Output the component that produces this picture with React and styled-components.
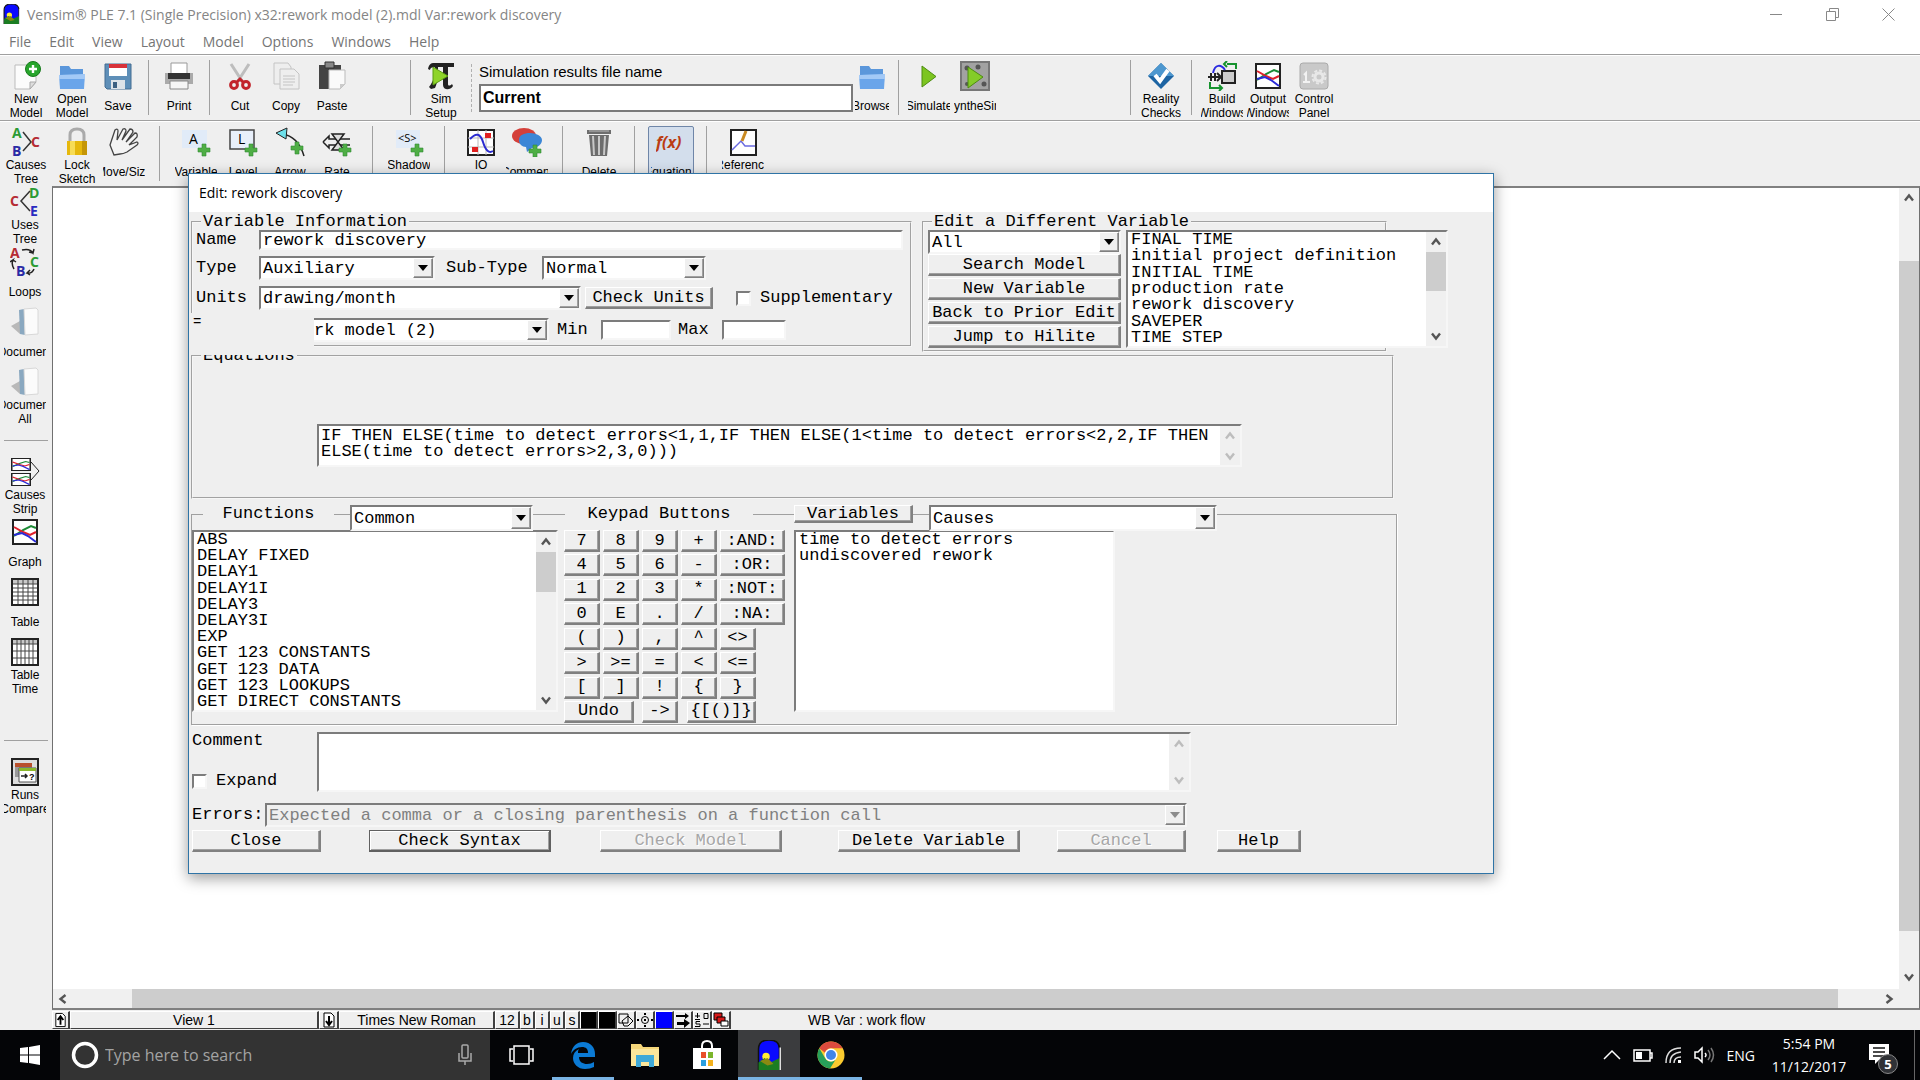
import React from 'react';
import styled, { createGlobalStyle, css } from 'styled-components';

const ui = `'Open Sans', 'Noto Sans', sans-serif`;
const sans = `'Liberation Sans', Arial, sans-serif`;
const mono = `'Liberation Mono', 'Courier New', monospace`;
const face = '#efefef';

const GlobalStyle = createGlobalStyle`
  * {
    box-sizing: border-box;
  }
  body {
    margin: 0;
    background: ${face};
    font-family: ${sans};
    overflow: hidden;
  }
  button, input, select, textarea {
    font: inherit;
    color: inherit;
    margin: 0;
    border-radius: 0;
    outline: none;
  }
`;

const raised = css`
  border: 1px solid;
  border-color: #fff #808080 #808080 #fff;
  box-shadow: inset -1px -1px 0 #a0a0a0;
`;

const sunken = css`
  border: 2px solid;
  border-color: #7c7c7c #f6f6f6 #f6f6f6 #7c7c7c;
`;

/* ---------- window frame ---------- */

const Window = styled.div`
  height: 100vh;
  display: flex;
  flex-direction: column;
  position: relative;
`;

const TitleBar = styled.header`
  height: 28px;
  flex: none;
  display: flex;
  align-items: center;
  padding: 0 4px 0 3px;
  background: #fff;
  color: #858585;
  font-family: ${ui};
  font-size: 14px;
`;

const TitleText = styled.span`
  flex: 1;
  padding-left: 7px;
`;

const CaptionButton = styled.button`
  width: 56px;
  height: 28px;
  padding: 0;
  border: 0;
  background: none;
  display: grid;
  place-items: center;
`;

const MenuBar = styled.nav`
  height: 26px;
  flex: none;
  display: flex;
  align-items: center;
  gap: 18px;
  padding-left: 9px;
  background: #fff;
  font-family: ${ui};
  font-size: 14px;
`;

const MenuLink = styled.a`
  color: #757575;
  text-decoration: none;
`;

/* ---------- toolbars ---------- */

const Toolbar = styled.div`
  height: 66px;
  flex: none;
  display: flex;
  padding: 5px 0 0 3px;
  border-top: 1px solid #a0a0a0;
  box-shadow: inset 0 1px 0 #fff;
`;

const ToolGroup = styled.div`
  display: flex;
  gap: ${p => p.$gap || 0}px;
  margin-right: ${p => p.$after || 0}px;
`;

const ToolButton = styled.button`
  width: ${p => p.$width || 46}px;
  height: 60px;
  padding: 0;
  border: ${p => (p.$active ? '1px solid #6f86a8' : '0')};
  background: ${p => (p.$active ? '#d3deec' : 'none')};
  border-radius: 2px;
  display: flex;
  flex-direction: column;
  align-items: center;
`;

const ToolIcon = styled.svg`
  width: 30px;
  height: 30px;
  margin: 1px 0;
  flex: none;
`;

const ToolLabel = styled.span`
  height: 28px;
  width: 42px;
  max-width: 90%;
  font-size: 12px;
  line-height: 14px;
  color: #000;
  display: flex;
  flex-direction: column;
  justify-content: center;
  align-items: center;
  white-space: nowrap;
  overflow: hidden;
`;

const Separator = styled.span`
  width: 1px;
  height: 55px;
  background: #a0a0a0;
  margin: ${p => (p.$wide ? '0 13px 0 12px' : '0 7px')};
`;

const DottedSeparator = styled.span`
  height: 48px;
  border-left: 1px dashed #b0b0b0;
  margin: 4px 7px 0;
`;

const ResultsField = styled.div`
  width: 374px;
  display: flex;
  flex-direction: column;
  gap: 2px;
  label {
    font-size: 15px;
    line-height: 21px;
    padding-top: 1px;
  }
  input {
    height: 28px;
    padding: 0 2px;
    border: 2px solid #7a7a7a;
    background: #fff;
    font-size: 16px;
    font-weight: bold;
  }
`;

/* ---------- workspace ---------- */

const Workspace = styled.div`
  flex: 1;
  min-height: 0;
  display: flex;
`;

const Sidebar = styled.aside`
  width: 52px;
  flex: none;
  padding-left: 2px;
  hr {
    width: 44px;
    margin: 14px 0 15px 2px;
    border: 0;
    border-top: 1px solid #a0a0a0;
  }
`;

const SideGap = styled.div`
  height: 30px;
`;

const Main = styled.div`
  flex: 1;
  min-width: 0;
  display: flex;
  flex-direction: column;
`;

const CanvasFrame = styled.main`
  flex: 1;
  display: flex;
  background: #fff;
  border: 1px solid #707070;
  border-top: 2px solid #808080;
  border-bottom: 2px solid #808080;
`;

const CanvasColumn = styled.div`
  flex: 1;
  display: flex;
  flex-direction: column;
`;

const Canvas = styled.div`
  flex: 1;
`;

const VTrack = styled.div`
  width: ${p => p.$width || 20}px;
  flex: none;
  display: flex;
  flex-direction: column;
  background: #f0f0f0;
`;

const HTrack = styled.div`
  height: 19px;
  display: flex;
  background: #f0f0f0;
`;

const ScrollButton = styled.button`
  width: 20px;
  height: 20px;
  flex: none;
  padding: 0;
  border: 0;
  background: none;
  display: grid;
  place-items: center;
  svg {
    width: 10px;
    height: 10px;
    fill: none;
    stroke: ${p => (p.disabled ? '#bdbdbd' : '#555')};
    stroke-width: 2.4;
  }
`;

const ScrollSpace = styled.span`
  flex: ${p => p.$grow || 0} 1 ${p => p.$size || 0}px;
`;

const Thumb = styled.span`
  flex: ${p => (p.$grow ? `${p.$grow} 1 0px` : `0 0 ${p.$size}px`)};
  background: #cdcdcd;
`;

const StatusBar = styled.footer`
  height: 20px;
  flex: none;
  display: flex;
  align-items: center;
  font-size: 14px;
`;

const StatusCell = styled.button`
  width: ${p => p.$width}px;
  height: 18px;
  padding: 0;
  background: ${p => p.$fill || face};
  border: 1px solid;
  border-color: #fff #404040 #404040 #fff;
  border-right-width: 2px;
  display: flex;
  align-items: center;
  justify-content: center;
  line-height: 16px;
  svg {
    width: 16px;
    height: 16px;
  }
`;

const StatusText = styled.span`
  padding-left: 77px;
`;

/* ---------- dialog ---------- */

const Dialog = styled.section`
  position: absolute;
  left: 188px;
  top: 173px;
  width: 68vw;
  height: 701px;
  background: ${face};
  border: 1px solid #2f74a6;
  box-shadow: 0 4px 14px rgba(0, 0, 0, 0.4);
  font-family: ${mono};
  font-size: 17px;
  line-height: 16px;
`;

const DialogTitle = styled.h1`
  height: 38px;
  margin: 0;
  padding-left: 10px;
  background: #fff;
  font-family: ${ui};
  font-size: 14px;
  font-weight: normal;
  line-height: 38px;
`;

const DialogBody = styled.form`
  padding: 2px 0 0 2px;
`;

const TopRow = styled.div`
  display: flex;
  align-items: flex-start;
  gap: 10px;
`;

const Group = styled.fieldset`
  margin: ${p => (p.$raised ? '-4px' : '0')} 0 0;
  padding: 0;
  min-width: 0;
  width: ${p => p.$width}px;
  height: ${p => p.$height}px;
  border: 2px groove #f6f6f6;
  position: relative;
  legend {
    margin-left: 8px;
    padding: 0 2px;
    clip-path: ${p => (p.$raised ? 'inset(7px 0 0 0)' : 'none')};
  }
`;

const Rows = styled.div`
  display: flex;
  flex-direction: column;
  gap: 6px;
  padding: 0 7px 0 3px;
`;

const FieldRow = styled.div`
  height: ${p => p.$height || 24}px;
  display: flex;
  align-items: center;
`;

const Label = styled.label`
  width: ${p => (p.$width ? `${p.$width}px` : 'auto')};
  flex: none;
  margin-left: ${p => p.$gap || 0}px;
  white-space: nowrap;
`;

const TextInput = styled.input`
  ${sunken}
  width: ${p => (p.$width ? `${p.$width}px` : 'auto')};
  flex: ${p => (p.$width ? 'none' : 1)};
  height: 20px;
  padding: 0 2px;
  background: #fff;
`;

const ComboBox = styled.div`
  ${sunken}
  width: ${p => p.$width}px;
  flex: none;
  height: ${p => p.$height || 24}px;
  background: ${p => (p.$off ? face : '#fff')};
  color: ${p => (p.$off ? '#808080' : '#000')};
  position: relative;
  select {
    width: 100%;
    height: 100%;
    padding: 1px 20px 0 2px;
    border: 0;
    background: none;
    appearance: none;
    opacity: 1;
  }
`;

const ComboArrow = styled.span`
  ${raised}
  position: absolute;
  top: 0;
  right: 0;
  bottom: 0;
  width: 20px;
  background: ${face};
  display: grid;
  place-items: center;
  pointer-events: none;
`;

const PushButton = styled.button`
  ${raised}
  border-right-width: 2px;
  border-bottom-width: 2px;
  width: ${p => (p.$width ? `${p.$width}px` : '100%')};
  flex: none;
  height: ${p => p.$height || 22}px;
  margin-left: ${p => p.$gap || 0}px;
  padding: 0;
  background: ${face};
  line-height: 16px;
  white-space: nowrap;
  ${p =>
    p.$default &&
    css`
      border-color: #606060;
      box-shadow: inset 1px 1px 0 #fff, inset -1px -1px 0 #a0a0a0;
    `}
  &:disabled {
    color: #a6a6a6;
    text-shadow: 1px 1px 0 #fff;
  }
`;

const CheckBox = styled.input`
  ${sunken}
  appearance: none;
  width: 15px;
  height: 15px;
  flex: none;
  margin: 0 9px 0 ${p => p.$gap || 0}px;
  background: #fff;
`;

/* stale strip of background left over the default-value row */
const EqualsPatch = styled.div`
  position: absolute;
  left: -2px;
  bottom: -2px;
  width: 123px;
  height: 34px;
  padding: 1px 0 0 2px;
  background: ${face};
  font-size: 14px;
`;

const DefaultRow = styled(FieldRow)`
  margin-top: 2px;
  padding-left: 63px;
`;

const PickRow = styled.div`
  display: flex;
  gap: 5px;
  padding-left: 4px;
`;

const PickButtons = styled.div`
  width: 193px;
  flex: none;
  display: flex;
  flex-direction: column;
  gap: 2px;
  > div {
    margin-bottom: -2px;
  }
`;

const ListBox = styled.div`
  ${sunken}
  width: ${p => p.$width}px;
  height: ${p => p.$height}px;
  flex: none;
  display: flex;
  background: #fff;
  ul {
    flex: 1;
    margin: 0;
    padding: 0 0 0 3px;
    list-style: none;
    display: flex;
    flex-direction: column;
    justify-content: ${p => (p.$full ? 'space-between' : 'flex-start')};
    white-space: nowrap;
  }
`;

const EquationBox = styled.div`
  ${sunken}
  width: 925px;
  height: 43px;
  margin: 60px 0 0 124px;
  display: flex;
  background: #fff;
`;

const CommentBox = styled(EquationBox)`
  width: 874px;
  height: 60px;
  margin: 0;
`;

const TextArea = styled.textarea`
  flex: 1;
  padding: 2px 0 0 2px;
  border: 0;
  background: none;
  resize: none;
  overflow: hidden;
`;

const Builder = styled.div`
  width: 1206px;
  margin-top: 6px;
`;

const BuilderHead = styled.div`
  height: 25px;
  display: flex;
  align-items: flex-start;
`;

const Rule = styled.span`
  width: ${p => (p.$width ? `${p.$width}px` : 'auto')};
  flex: ${p => (p.$width ? 'none' : 1)};
  height: 17px;
  margin-top: 9px;
  border-top: 1px solid #a0a0a0;
  border-left: ${p => (p.$start ? '1px solid #a0a0a0' : 0)};
  border-right: ${p => (p.$width ? 0 : '1px solid #a0a0a0')};
  box-shadow: ${p => (p.$width ? 'none' : '1px 0 0 #fff')};
`;

const HeadText = styled.span`
  width: ${p => p.$width}px;
  text-align: center;
  padding-top: 1px;
  white-space: nowrap;
`;

const BuilderBody = styled.div`
  height: 195px;
  display: flex;
  align-items: flex-start;
  border: 1px solid #a0a0a0;
  border-top: 0;
  box-shadow: 1px 1px 0 #fff;
`;

const Keypad = styled.div`
  width: 222px;
  height: 193px;
  margin: 0 8px 0 6px;
  display: flex;
  flex-direction: column;
  justify-content: space-between;
`;

const KeyRow = styled.div`
  display: flex;
  gap: 3px;
`;

const CommentRow = styled.div`
  display: flex;
  padding: 7px 0 11px 1px;
`;

const CommentLabels = styled.div`
  width: 125px;
  display: flex;
  flex-direction: column;
  justify-content: space-between;
  padding: 1px 0 3px;
`;

const ErrorRow = styled(FieldRow)`
  padding-left: 1px;
`;

const ActionRow = styled.div`
  display: flex;
  padding: 3px 0 0 1px;
`;

/* ---------- taskbar ---------- */

const Taskbar = styled.div`
  height: 50px;
  flex: none;
  display: flex;
  background: #040507;
  color: #fff;
  font-family: ${ui};
  font-size: 14px;
`;

const TaskButton = styled.button`
  width: ${p => p.$width || 62}px;
  padding: 0;
  border: 0;
  background: ${p => (p.$active ? '#3b3c3e' : 'none')};
  border-bottom: 3px solid ${p => (p.$running ? '#7ab4e4' : 'transparent')};
  border-top: 3px solid transparent;
  background-clip: border-box;
  display: grid;
  place-items: center;
`;

const SearchBox = styled.div`
  width: 430px;
  display: flex;
  align-items: center;
  padding: 0 17px 0 11px;
  background: #333;
  input {
    flex: 1;
    min-width: 0;
    border: 0;
    padding: 0 6px;
    background: none;
    font-size: 16px;
  }
  input::placeholder {
    color: #a3a3a3;
  }
`;

const Tray = styled.div`
  margin-left: auto;
  display: flex;
  align-items: center;
  gap: 12px;
  padding-right: 5px;
`;

const Clock = styled.time`
  width: 84px;
  text-align: center;
  line-height: 23px;
`;

const Notices = styled.button`
  width: 52px;
  height: 50px;
  padding: 8px 12px 0 0;
  border: 0;
  border-right: 1px solid #666;
  background: none;
  color: #fff;
`;

/* ---------- drawings ---------- */

const Plus = ({ x = 17, y = 17 }) => (
  <path
    transform={`translate(${x} ${y})`}
    d="M4 0h4v4h4v4H8v4H4V8H0V4h4z"
    fill="#4fae45"
    stroke="#2f8a34"
    strokeWidth=".6"
  />
);

const Folder = () => (
  <g>
    <path d="M3 5h9l2 3h12v7H3z" fill="#5b97db" />
    <path d="M2 14l26-1-1 15H3z" fill="#6aa5ea" />
    <path d="M2 14l26-1v5H2z" fill="#a3c9f6" />
  </g>
);

const Lines = ({ x = 2, y = 2, w = 26, h = 26 }) => (
  <svg x={x} y={y} width={w} height={h} viewBox="0 0 26 26" preserveAspectRatio="none">
    <path d="M1 1h24v24H1z" fill="#fff" stroke="#222" strokeWidth="2" />
    <g fill="none" strokeWidth="2">
      <path d="M2 17l9-6 8-4 5 2" stroke="#1c8a35" />
      <path d="M2 8l9 5 7 3 6-3" stroke="#e0202c" />
      <path d="M2 16l8-2 6 3 8 6" stroke="#2a2ad8" />
    </g>
  </svg>
);

const Letter = ({ x, y, c, children }) => (
  <text x={x} y={y} fill={c} fontFamily="Open Sans" fontWeight="bold" fontSize="14">
    {children}
  </text>
);

const Notebook = () => (
  <g>
    <path d="M1 19l9-5v13z" fill="#b8b8b8" />
    <path d="M9 3l5-1 1 26-5-1z" fill="#8aa8c0" />
    <path d="M14 2l12-1 2 2v24l-13 1z" fill="#fbfbfb" stroke="#d8d8d8" />
  </g>
);

const Grid = ({ cols, rows }) => (
  <g>
    <path d="M2 2h26v26H2z" fill="#fff" stroke="#222" strokeWidth="2" />
    <path d="M3 3h24v4H3z" fill="#c9c9c9" />
    <path d={cols.map(c => `M${c} 3v24`).join('') + rows.map(r => `M3 ${r}h24`).join('')} stroke="#444" />
  </g>
);

const drawings = {
  newModel: (
    <g>
      <path d="M4 4h21v17l-6 7H4z" fill="#fcfcfc" stroke="#bbb" />
      <path d="M19 28v-7h6z" fill="#ddd" stroke="#aaa" />
      <circle cx="22" cy="8" r="7.5" fill="#27a52c" stroke="#177a1c" />
      <path d="M22 4v8M18 8h8" stroke="#fff" strokeWidth="2.4" />
    </g>
  ),
  folder: <Folder />,
  save: (
    <g>
      <path d="M2 3h26v25H4l-2-2z" fill="#5e8fb8" stroke="#426d92" />
      <path d="M6 3h18v12H6z" fill="#fff" />
      <path d="M6 3h18v4H6z" fill="#d8323a" />
      <path d="M8 19h14v9H8z" fill="#dde3e8" />
      <path d="M10 21h4v6h-4z" fill="#3b5f80" />
    </g>
  ),
  print: (
    <g>
      <path d="M7 2h16v11H7z" fill="#fff" stroke="#999" />
      <path d="M1 12h28v11H1z" fill="#aaa" />
      <path d="M4 12h22v6H4z" fill="#333" />
      <path d="M6 20h18v8H6z" fill="#f5f5f5" stroke="#888" />
    </g>
  ),
  cut: (
    <g>
      <path d="M6 3l11 17M24 3L13 20" stroke="#bdbdbd" strokeWidth="3" />
      <g fill="none" stroke="#c2242c" strokeWidth="3">
        <circle cx="9" cy="24" r="3.4" />
        <circle cx="21" cy="24" r="3.4" />
        <path d="M12 21l3-3 3 3" />
      </g>
    </g>
  ),
  copy: (
    <g fill="#eee" stroke="#c4c4c4">
      <path d="M3 2h14l3 4v17H3z" />
      <path d="M9 8h14l5 5v15H9z" />
      <path d="M12 15h12M12 18h12M12 21h12M12 24h10" />
    </g>
  ),
  paste: (
    <g>
      <path d="M2 4h22v24H2z" fill="#444" />
      <path d="M8 1h9v6H8z" fill="#888" stroke="#333" />
      <path d="M12 9h16v14l-5 5H12z" fill="#fafafa" stroke="#bbb" />
      <path d="M23 28v-5h5z" fill="#ccc" />
    </g>
  ),
  simSetup: (
    <g>
      <path d="M2 8c1-5 3-6 6-6h20v4h-6v17c0 2 2 2 4 0l1 2c-3 5-10 4-10-1V6h-5c0 8 0 15-3 21l-4 1-2-2C8 20 9 13 9 6 6 6 4 7 4 9z" fill="#222" />
      <path d="M7 6l15 9-15 9z" fill="#8fd42a" stroke="#5a9c12" />
    </g>
  ),
  play: <path d="M8 5l14 10.500L8 26z" fill="#7cc51f" stroke="#4d8c11" />,
  synth: (
    <g>
      <path d="M1 1h28v28H1z" fill="#a2a2a2" stroke="#777" strokeWidth="2" />
      <g fill="#555">
        <circle cx="7" cy="7" r="2.500" />
        <circle cx="18" cy="6" r="2.500" />
        <circle cx="24" cy="23" r="2.500" />
        <circle cx="7" cy="23" r="2" />
      </g>
      <path d="M8 6l15 10L8 27z" fill="#84cc28" stroke="#4d8c11" />
    </g>
  ),
  reality: (
    <g>
      <path d="M15 2l13 13-13 13L2 15z" fill="#1d64a3" />
      <path d="M15 2l13 13H2z" fill="#4d97cf" />
      <path d="M9 14l5 6 8-11" fill="none" stroke="#fff" strokeWidth="4" />
    </g>
  ),
  build: (
    <g fill="none" strokeWidth="2">
      <path d="M15 10h13v12H15z" fill="#ccc" stroke="#222" />
      <path d="M1 16h14M4 12v8M8 12v8M10 12l4 4-4 4" stroke="#222" />
      <path d="M6 12C8 3 14 3 18 9" stroke="#2b2be0" />
      <path d="M29 8V3h-9M20 0l-3 3 3 3" stroke="#16932e" />
      <path d="M3 21v6h12M12 24l3 3-3 3" stroke="#16932e" />
    </g>
  ),
  lines: <Lines />,
  control: (
    <g>
      <rect x="1" y="2" width="28" height="26" rx="3" fill="#c9c9c9" stroke="#aaa" />
      <circle cx="20" cy="16" r="4" fill="none" stroke="#e8e8e8" strokeWidth="3" />
      <circle cx="20" cy="16" r="6.500" fill="none" stroke="#e8e8e8" strokeWidth="2" strokeDasharray="3 2" />
      <path d="M4 21h7M7 21v-9l-2 2" fill="none" stroke="#f2f2f2" strokeWidth="2" />
    </g>
  ),
  causes: (
    <g>
      <Letter x="1" y="11" c="#2c9b35">A</Letter>
      <Letter x="1" y="29" c="#2a2aa5">B</Letter>
      <Letter x="20" y="20" c="#b52c34">C</Letter>
      <path d="M12 5l8 10-8 9" fill="none" stroke="#333" strokeWidth="1.500" />
    </g>
  ),
  uses: (
    <g>
      <Letter x="0" y="19" c="#b52c34">C</Letter>
      <Letter x="19" y="11" c="#2c9b35">D</Letter>
      <Letter x="20" y="29" c="#2a2ac0">E</Letter>
      <path d="M20 4l-9 10 9 10" fill="none" stroke="#333" strokeWidth="1.500" />
    </g>
  ),
  loops: (
    <g>
      <Letter x="0" y="11" c="#b52c34">A</Letter>
      <Letter x="20" y="20" c="#2c9b35">C</Letter>
      <Letter x="6" y="29" c="#2a2aa5">B</Letter>
      <path d="M12 3q8-2 11 3l1-4m-1 4l-4-1M4 22q-3-5-1-9l-3 2m3-2l3 2M24 22q-2 5-7 4l3-3m-3 3l3 2" fill="none" stroke="#222" strokeWidth="1.500" />
    </g>
  ),
  lock: (
    <g>
      <path d="M8 15V8q0-6 7-6t7 6v7" fill="none" stroke="#aaa" strokeWidth="3" />
      <path d="M5 14h20v14H5z" fill="#e6b80c" />
      <path d="M8 14h5v14H8z" fill="#f7dc55" />
      <path d="M20 14h5v14h-5z" fill="#c59606" />
    </g>
  ),
  hand: (
    <path d="M5 28L1 18 6 3q3-2 3 1L8 13 14 2q3-1 3 2l-4 9 8-11q3 0 3 3l-7 10 9-9q3 0 2 4l-8 8 8-3q2 1 0 3l-10 7q-4 2-7 2z" fill="#f4f4f4" stroke="#444" strokeWidth="1.300" />
  ),
  variable: (
    <g>
      <path d="M1 3h25v18H1z" fill="#e1ebf8" />
      <text x="8" y="17" fontFamily="Open Sans" fontSize="14">A</text>
      <Plus />
    </g>
  ),
  level: (
    <g>
      <path d="M2 3h24v19H2z" fill="#e8effa" stroke="#444" strokeWidth="1.500" />
      <text x="10" y="17" fontFamily="Open Sans" fontSize="14">L</text>
      <Plus />
    </g>
  ),
  arrow: (
    <g>
      <path d="M7 7q16 2 22 22" fill="none" stroke="#222" strokeWidth="1.500" />
      <path d="M1 6l11-5-1 11z" fill="#6ee0ea" stroke="#222" />
      <Plus x={16} y={15} />
    </g>
  ),
  rate: (
    <g>
      <path d="M1 15l6-6v3h21M1 15l6 6v-3h21" fill="none" stroke="#222" strokeWidth="1.500" />
      <path d="M10 7h12L10 23h12z" fill="#ddd" stroke="#222" strokeWidth="1.500" />
      <Plus />
    </g>
  ),
  shadow: (
    <g>
      <path d="M2 3h24v18H2z" fill="#e1ebf8" />
      <text x="4" y="15" fontFamily="Open Sans" fontSize="11">&lt;S&gt;</text>
      <Plus />
    </g>
  ),
  io: (
    <g>
      <path d="M2 3h26v25H2z" fill="#fff" stroke="#222" strokeWidth="2" />
      <path d="M12 3v25M20 3v25M2 11h26M2 20h26" stroke="#bbb" />
      <path d="M4 12q9-10 13 3t10 9" fill="none" stroke="#2b2bd0" strokeWidth="2" />
      <path d="M19 6h6v5h-6zM6 20h6v5H6z" fill="#e02020" />
    </g>
  ),
  comment: (
    <g>
      <ellipse cx="12" cy="9" rx="12" ry="8" fill="#d4403a" />
      <path d="M7 13c0-5 5-7 11-7s12 3 12 7-4 8-10 8l-5 4-1-5c-4 0-7-3-7-7z" fill="#3b86d6" />
      <Plus y={18} />
    </g>
  ),
  trash: (
    <g>
      <path d="M3 3h24v4H3zM5 8h20l-2 21H7z" fill="#6d6d6d" />
      <path d="M9 9l1 19M15 9v19M21 9l-1 19" stroke="#c8c8c8" strokeWidth="2" />
      <path d="M5 4h20" stroke="#bbb" />
    </g>
  ),
  fx: (
    <text x="0" y="20" fill="#bb3c12" fontFamily="Open Sans" fontStyle="italic" fontWeight="bold" fontSize="16">
      f(x)
    </text>
  ),
  reference: (
    <g>
      <path d="M3 3h25v25H3z" fill="#fff" stroke="#222" strokeWidth="2" />
      <path d="M4 23l9-9 4 5h10" fill="none" stroke="#6a6ae0" strokeWidth="1.500" />
      <path d="M14 14l4-10" stroke="#c98a22" strokeWidth="3" />
    </g>
  ),
  notebook: <Notebook />,
  strip: (
    <g>
      <Lines x={1} y={1} w={20} h={13} />
      <Lines x={1} y={16} w={20} h={13} />
      <path d="M21 5l8 9-8 9" fill="none" stroke="#222" />
    </g>
  ),
  table: <Grid cols={[8, 13, 18, 23]} rows={[7, 11, 15, 19, 23]} />,
  tableTime: <Grid cols={[7, 11, 15, 19, 23]} rows={[7, 14, 21]} />,
  runs: (
    <g>
      <path d="M2 2h26v26H2z" fill="#ddd" stroke="#222" strokeWidth="2" />
      <path d="M5 6h17v14H5z" fill="#999" />
      <path d="M5 6h17v4H5z" fill="#b9502c" />
      <path d="M9 11h17v14H9z" fill="#fff" stroke="#555" />
      <path d="M9 11h17v3H9z" fill="#8ab82b" />
      <path d="M11 19h6m-2-2l2 2-2 2" stroke="#222" strokeWidth="1.500" fill="none" />
      <text x="19" y="23" fontFamily="Liberation Sans" fontWeight="bold" fontSize="9">?</text>
    </g>
  ),
};

const VensimLogo = ({ width, height }) => (
  <svg width={width} height={height} viewBox="0 0 16 20" preserveAspectRatio="none">
    <path d="M1 20V6q0-6 7-6t7 6v14z" fill="#0a0aff" stroke="#111" />
    <circle cx="6" cy="11" r="2.500" fill="#ffee35" />
    <path d="M1 20v-5l4-3 4 3 6-3v8z" fill="#1b7d22" />
    <path d="M2 14l5-2 4 4-4 1z" fill="#8a8a12" />
    <path d="M15.500 5v15" stroke="#ddd" />
  </svg>
);

const Chevron = ({ d }) => (
  <svg viewBox="0 0 10 10">
    <path d={d} />
  </svg>
);

const up = 'M1 7.500l4-5 4 5';
const down = 'M1 2.500l4 5 4-5';
const left = 'M7.500 1l-5 4 5 4';
const right = 'M2.500 1l5 4-5 4';

/* ---------- parts ---------- */

const Tool = ({ icon, label, ...rest }) => (
  <ToolButton type="button" {...rest}>
    <ToolIcon viewBox="0 0 30 30">{drawings[icon]}</ToolIcon>
    <ToolLabel>
      {label.split('|').map(line => (
        <span key={line}>{line}</span>
      ))}
    </ToolLabel>
  </ToolButton>
);

const Combo = ({ id, value, width, height, disabled, label }) => (
  <ComboBox $width={width} $height={height} $off={disabled}>
    <select id={id} disabled={disabled} aria-label={label}>
      <option>{value}</option>
    </select>
    <ComboArrow>
      <svg width="10" height="6">
        <path d="M0 0h10L5 6z" fill={disabled ? '#8c8c8c' : '#000'} />
      </svg>
    </ComboArrow>
  </ComboBox>
);

const VScroll = ({ disabled, thumb, width }) => (
  <VTrack $width={width}>
    <ScrollButton type="button" aria-label="Scroll up" disabled={disabled}>
      <Chevron d={up} />
    </ScrollButton>
    {thumb && <Thumb $size={thumb} />}
    <ScrollSpace $grow={1} />
    <ScrollButton type="button" aria-label="Scroll down" disabled={disabled}>
      <Chevron d={down} />
    </ScrollButton>
  </VTrack>
);

const List = ({ items, width, height, thumb, label }) => (
  <ListBox $width={width} $height={height} $full={Boolean(thumb)}>
    <ul role="listbox" aria-label={label}>
      {items.map(item => (
        <li key={item} role="option" aria-selected="false">
          {item}
        </li>
      ))}
    </ul>
    {thumb && <VScroll thumb={thumb} />}
  </ListBox>
);

const menus = ['File', 'Edit', 'View', 'Layout', 'Model', 'Options', 'Windows', 'Help'];

const modelVariables = [
  'FINAL TIME',
  'initial project definition',
  'INITIAL TIME',
  'production rate',
  'rework discovery',
  'SAVEPER',
  'TIME STEP',
];

const functions = [
  'ABS',
  'DELAY FIXED',
  'DELAY1',
  'DELAY1I',
  'DELAY3',
  'DELAY3I',
  'EXP',
  'GET 123 CONSTANTS',
  'GET 123 DATA',
  'GET 123 LOOKUPS',
  'GET DIRECT CONSTANTS',
];

const keys = [
  ['7', '8', '9', '+', ':AND:'],
  ['4', '5', '6', '-', ':OR:'],
  ['1', '2', '3', '*', ':NOT:'],
  ['0', 'E', '.', '/', ':NA:'],
  ['(', ')', ',', '^', '<>'],
  ['>', '>=', '=', '<', '<='],
  ['[', ']', '!', '{', '}'],
];

const equation =
  'IF THEN ELSE(time to detect errors<1,1,IF THEN ELSE(1<time to detect errors<2,2,IF THEN ELSE(time to detect errors>2,3,0)))';

const MainToolbar = () => (
  <Toolbar>
    <Tool icon="newModel" label="New|Model" />
    <Tool icon="folder" label="Open|Model" />
    <Tool icon="save" label="Save" />
    <Separator />
    <Tool icon="print" label="Print" />
    <Separator />
    <ToolGroup $after={48}>
      <Tool icon="cut" label="Cut" />
      <Tool icon="copy" label="Copy" />
      <Tool icon="paste" label="Paste" />
    </ToolGroup>
    <Separator />
    <Tool icon="simSetup" label="Sim|Setup" />
    <DottedSeparator />
    <ResultsField>
      <label htmlFor="results">Simulation results file name</label>
      <input id="results" defaultValue="Current" />
    </ResultsField>
    <Tool icon="folder" label="Browse" $width={38} />
    <Separator />
    <ToolGroup $after={125}>
      <Tool icon="play" label="Simulate" />
      <Tool icon="synth" label="SyntheSim" />
    </ToolGroup>
    <Separator />
    <Tool icon="reality" label="Reality|Checks" />
    <Separator />
    <Tool icon="build" label="Build|Windows" />
    <Tool icon="lines" label="Output|Windows" />
    <Tool icon="control" label="Control|Panel" />
  </Toolbar>
);

const SketchToolbar = () => (
  <Toolbar>
    <ToolGroup $after={5}>
      <Tool icon="causes" label="Causes|Tree" />
    </ToolGroup>
    <ToolGroup $gap={1}>
      <Tool icon="lock" label="Lock|Sketch" />
      <Tool icon="hand" label="Move/Size" />
    </ToolGroup>
    <Separator $wide />
    <ToolGroup $gap={1}>
      <Tool icon="variable" label="Variable" />
      <Tool icon="level" label="Level" />
      <Tool icon="arrow" label="Arrow" />
      <Tool icon="rate" label="Rate" />
    </ToolGroup>
    <Separator $wide />
    <Tool icon="shadow" label="Shadow|Variable" />
    <Separator $wide />
    <Tool icon="io" label="IO|Object" />
    <Tool icon="comment" label="Comment" />
    <Separator $wide />
    <Tool icon="trash" label="Delete" />
    <Separator $wide />
    <Tool icon="fx" label="Equations" $active />
    <Separator $wide />
    <Tool icon="reference" label="Reference|Mode" />
  </Toolbar>
);

const AnalysisBar = () => (
  <Sidebar>
    <Tool icon="uses" label="Uses|Tree" />
    <Tool icon="loops" label="Loops" />
    <Tool icon="notebook" label="Document" />
    <Tool icon="notebook" label="Document|All" />
    <hr />
    <Tool icon="strip" label="Causes|Strip" />
    <Tool icon="lines" label="Graph" />
    <Tool icon="table" label="Table" />
    <Tool icon="tableTime" label="Table|Time" />
    <SideGap />
    <hr />
    <Tool icon="runs" label="Runs|Compare" />
  </Sidebar>
);

const Status = () => (
  <StatusBar>
    <StatusCell $width={18} aria-label="Previous view">
      <svg viewBox="0 0 16 16"><path d="M3 1h7l3 3v11H3z" fill="#fff" stroke="#000" /><path d="M8 13V5M5 8l3-4 3 4" fill="none" stroke="#000" strokeWidth="2" /></svg>
    </StatusCell>
    <StatusCell $width={249}>View 1</StatusCell>
    <StatusCell $width={20} aria-label="Next view">
      <svg viewBox="0 0 16 16"><path d="M3 1h7l3 3v11H3z" fill="#fff" stroke="#000" /><path d="M8 4v8M5 9l3 4 3-4" fill="none" stroke="#000" strokeWidth="2" /></svg>
    </StatusCell>
    <StatusCell $width={156}>Times New Roman</StatusCell>
    <StatusCell $width={25}>12</StatusCell>
    <StatusCell $width={15}>b</StatusCell>
    <StatusCell $width={15}>i</StatusCell>
    <StatusCell $width={15}>u</StatusCell>
    <StatusCell $width={15}>s</StatusCell>
    <StatusCell $width={18} $fill="#000" aria-label="Text color" />
    <StatusCell $width={19} $fill="#000" aria-label="Line color" />
    <StatusCell $width={19} aria-label="Shape">
      <svg viewBox="0 0 16 16" fill="none" stroke="#000"><path d="M1 2h9v9H1z" /><path d="M10 4l5 5-5 5H6L4 9z" /></svg>
    </StatusCell>
    <StatusCell $width={19} aria-label="Position">
      <svg viewBox="0 0 16 16"><circle cx="8" cy="8" r="3.500" fill="none" stroke="#000" /><path d="M7 7h2v2H7zM7 1h2v2H7zM7 13h2v2H7zM0 7h2v2H0zM14 7h2v2h-2z" /></svg>
    </StatusCell>
    <StatusCell $width={19} $fill="#0000ff" aria-label="Arrow color" />
    <StatusCell $width={19} aria-label="Arrow width">
      <svg viewBox="0 0 16 16"><path d="M1 3h9V1l4 3-4 3V5H1zM2 10h7V7l6 4-6 5v-3H2z" /></svg>
    </StatusCell>
    <StatusCell $width={19} aria-label="Polarity">
      <svg viewBox="0 0 16 16" fill="none" stroke="#000"><path d="M1 4h5M3.500 1v5M1 7.500h5M10 1.500h4v5h-4zM6 9.500H2v2.500h4v2.500H1M9 12h6" /></svg>
    </StatusCell>
    <StatusCell $width={19} aria-label="Layers">
      <svg viewBox="0 0 16 16"><path d="M1 1h8v7H1z" fill="#d81818" stroke="#000" /><path d="M4 5h8v6H4z" fill="#d81818" stroke="#000" /><path d="M8 9h7v5H8z" fill="#fff" stroke="#000" /></svg>
    </StatusCell>
    <StatusText>WB Var : work flow</StatusText>
  </StatusBar>
);

const EquationEditor = () => (
  <Dialog role="dialog" aria-labelledby="dialog-title">
    <DialogTitle id="dialog-title">Edit: rework discovery</DialogTitle>
    <DialogBody>
      <TopRow>
        <Group $width={721} $height={133}>
          <legend>Variable Information</legend>
          <Rows>
            <FieldRow $height={20}>
              <Label $width={63} htmlFor="name">Name</Label>
              <TextInput id="name" defaultValue="rework discovery" />
            </FieldRow>
            <FieldRow>
              <Label $width={63} htmlFor="type">Type</Label>
              <Combo id="type" value="Auxiliary" width={176} />
              <Label $width={96} $gap={11} htmlFor="subtype">Sub-Type</Label>
              <Combo id="subtype" value="Normal" width={164} />
            </FieldRow>
            <FieldRow>
              <Label $width={63} htmlFor="units">Units</Label>
              <Combo id="units" value="drawing/month" width={322} />
              <PushButton type="button" $width={128} $gap={4}>Check Units</PushButton>
              <CheckBox type="checkbox" id="supp" $gap={23} />
              <Label htmlFor="supp">Supplementary</Label>
            </FieldRow>
            <DefaultRow>
              <Combo label="Group" value={'\u00a0rework model (2)'} width={290} />
              <Label $width={44} $gap={8} htmlFor="min">Min</Label>
              <TextInput id="min" $width={70} />
              <Label $width={44} $gap={7} htmlFor="max">Max</Label>
              <TextInput id="max" $width={64} />
            </DefaultRow>
          </Rows>
          <EqualsPatch>=</EqualsPatch>
        </Group>
        <Group $width={465} $height={138}>
          <legend>Edit a Different Variable</legend>
          <PickRow>
            <PickButtons>
              <Combo label="Filter" value="All" width={193} />
              <PushButton type="button">Search Model</PushButton>
              <PushButton type="button">New Variable</PushButton>
              <PushButton type="button">Back to Prior Edit</PushButton>
              <PushButton type="button">Jump to Hilite</PushButton>
            </PickButtons>
            <List label="Variables in model" items={modelVariables} width={322} height={118} thumb={39} />
          </PickRow>
        </Group>
      </TopRow>
      <Group $width={1203} $height={151} $raised>
        <legend>Equations</legend>
        <EquationBox>
          <TextArea aria-label="Equation" defaultValue={equation} spellCheck="false" />
          <VScroll disabled />
        </EquationBox>
      </Group>
      <Builder>
        <BuilderHead>
          <Rule $width={12} $start />
          <HeadText $width={131}>Functions</HeadText>
          <Rule $width={16} />
          <Combo label="Functions" value="Common" width={183} height={26} />
          <Rule $width={32} />
          <HeadText $width={188}>Keypad Buttons</HeadText>
          <Rule $width={41} />
          <PushButton type="button" $width={119} $height={18}>Variables</PushButton>
          <Rule $width={16} />
          <Combo label="Variables" value="Causes" width={288} height={26} />
          <Rule />
        </BuilderHead>
        <BuilderBody>
          <List label="Functions" items={functions} width={366} height={182} thumb={40} />
          <Keypad>
            {keys.map((row, i) => (
              <KeyRow key={row[0]}>
                {row.map((k, j) => (
                  <PushButton type="button" key={k} $width={j === 4 && i < 4 ? 65 : 36}>
                    {k}
                  </PushButton>
                ))}
              </KeyRow>
            ))}
            <KeyRow>
              <PushButton type="button" $width={70}>Undo</PushButton>
              <PushButton type="button" $width={36} $gap={5}>-&gt;</PushButton>
              <PushButton type="button" $width={69} $gap={6}>{'{[()]}'}</PushButton>
            </KeyRow>
          </Keypad>
          <List label="Causes" items={['time to detect errors', 'undiscovered rework']} width={321} height={182} />
        </BuilderBody>
      </Builder>
      <CommentRow>
        <CommentLabels>
          <Label htmlFor="comment">Comment</Label>
          <FieldRow $height={16}>
            <CheckBox type="checkbox" id="expand" />
            <Label htmlFor="expand">Expand</Label>
          </FieldRow>
        </CommentLabels>
        <CommentBox>
          <TextArea id="comment" />
          <VScroll disabled />
        </CommentBox>
      </CommentRow>
      <ErrorRow>
        <Label $width={73} htmlFor="errors">Errors:</Label>
        <Combo
          id="errors"
          value="Expected a comma or a closing parenthesis on a function call"
          width={922}
          disabled
        />
      </ErrorRow>
      <ActionRow>
        <PushButton type="button" $width={129}>Close</PushButton>
        <PushButton type="button" $width={182} $gap={48} $default>Check Syntax</PushButton>
        <PushButton type="button" $width={182} $gap={49} disabled>Check Model</PushButton>
        <PushButton type="button" $width={182} $gap={56}>Delete Variable</PushButton>
        <PushButton type="button" $width={129} $gap={37} disabled>Cancel</PushButton>
        <PushButton type="button" $width={84} $gap={31}>Help</PushButton>
      </ActionRow>
    </DialogBody>
  </Dialog>
);

const WindowsTaskbar = () => (
  <Taskbar>
    <TaskButton $width={60} aria-label="Start">
      <svg width="20" height="20" viewBox="0 0 20 20" fill="#fff">
        <path d="M0 3l8-1v7.500H0zM9 2l11-2v9.500H9zM0 10.500h8V18l-8-1zM9 10.500h11V20L9 18z" />
      </svg>
    </TaskButton>
    <SearchBox>
      <svg width="28" height="28"><circle cx="14" cy="14" r="11.500" fill="none" stroke="#fff" strokeWidth="3.500" /></svg>
      <input aria-label="Search" placeholder="Type here to search" />
      <svg width="16" height="22" viewBox="0 0 16 22" fill="none" stroke="#aaa" strokeWidth="1.500">
        <rect x="5" y="1" width="6" height="13" rx="1" />
        <path d="M2 9v8h12V9M8 17v4" />
      </svg>
    </SearchBox>
    <TaskButton aria-label="Task view">
      <svg width="25" height="20" fill="none" stroke="#fff" strokeWidth="1.500">
        <path d="M5 1h15v18H5zM4 4H1v12h3M21 4h3v12h-3" />
      </svg>
    </TaskButton>
    <TaskButton $running aria-label="Edge">
      <svg width="26" height="28" viewBox="0 0 26 28">
        <path d="M1 13C2 5 7 1 13 1c8 0 12 6 12 12v3H9c0 5 4 7 8 7 3 0 5-1 7-2v5c-3 1-5 2-9 2C8 28 3 23 3 17c0-4 2-7 6-9-1 1-1 3-1 4h10c0-4-2-6-6-6C7 6 3 9 1 13z" fill="#0b7ad4" />
      </svg>
    </TaskButton>
    <TaskButton aria-label="File Explorer">
      <svg width="28" height="24" viewBox="0 0 28 24">
        <path d="M0 1h10l2 3h16v19H0z" fill="#f5d77a" />
        <path d="M0 6h28v17H0z" fill="#fbe69b" />
        <path d="M5 24V12h18v12h-5v-5h-8v5z" fill="#3fa9d8" />
      </svg>
    </TaskButton>
    <TaskButton aria-label="Store">
      <svg width="30" height="30" viewBox="0 0 30 30">
        <path d="M10 9V6q0-5 5-5t5 5v3" fill="none" stroke="#fff" strokeWidth="2" />
        <path d="M1 8h28v21H1z" fill="#fff" />
        <path d="M9 12h5v6H9z" fill="#e8502a" />
        <path d="M16 12h5v6h-5z" fill="#7bb52b" />
        <path d="M9 20h5v6H9z" fill="#2a9fe0" />
        <path d="M16 20h5v6h-5z" fill="#f4b21e" />
      </svg>
    </TaskButton>
    <TaskButton $running $active aria-label="Vensim">
      <VensimLogo width={24} height={30} />
    </TaskButton>
    <TaskButton $running aria-label="Chrome">
      <svg width="28" height="28" viewBox="0 0 28 28">
        <circle cx="14" cy="14" r="13.500" fill="#fbcb2f" />
        <path d="M2.300 7.200A13.500 13.500 0 0 1 25.700 7.200H14a6.500 6.500 0 0 0-6 4.500z" fill="#dd4b3e" />
        <path d="M2.300 7.200A13.500 13.500 0 0 0 13 27.500l6-9.500a6.500 6.500 0 0 1-11-1z" fill="#27a05a" />
        <circle cx="14" cy="14" r="6.500" fill="#fff" />
        <circle cx="14" cy="14" r="5" fill="#4285e8" />
      </svg>
    </TaskButton>
    <Tray>
      <svg width="18" height="12" fill="none" stroke="#fff" strokeWidth="1.500"><path d="M1 10l8-8 8 8" /></svg>
      <svg width="20" height="13"><path d="M1 1h16v11H1zM17 4h2v5h-2" fill="none" stroke="#fff" strokeWidth="1.500" /><path d="M3 3h6v7H3z" fill="#fff" /></svg>
      <svg width="17" height="17" fill="none" stroke="#ddd" strokeWidth="1.500"><path d="M1 16Q1 1 16 1M5 16Q5 6 16 5M9 16q0-6 7-6" /><path d="M13 13h3v3h-3z" fill="#fff" stroke="none" /></svg>
      <svg width="21" height="18" fill="none" stroke="#fff" strokeWidth="1.500"><path d="M1 6h3l4-4v14l-4-4H1zM11 7q2 2 0 4" /><path d="M14 4q4 5 0 10M17 2q5 7 0 14" stroke="#777" /></svg>
      <span>ENG</span>
      <Clock>
        5:54 PM
        <br />
        11/12/2017
      </Clock>
      <Notices aria-label="Notifications">
        <svg width="34" height="34" viewBox="0 0 34 34">
          <path d="M3 4h20v16H13l-4 4v-4H3z" fill="#fff" />
          <path d="M7 8h12M7 12h12M7 16h12" stroke="#111" strokeWidth="1.500" />
          <circle cx="22" cy="24" r="9.500" fill="#303236" stroke="#888" />
          <text x="22" y="29" fill="#fff" textAnchor="middle" fontFamily="Open Sans" fontWeight="bold" fontSize="13">5</text>
        </svg>
      </Notices>
    </Tray>
  </Taskbar>
);

const App = () => (
  <Window>
    <GlobalStyle />
    <TitleBar>
      <VensimLogo width={17} height={20} />
      <TitleText>Vensim® PLE 7.1 (Single Precision) x32:rework model (2).mdl Var:rework discovery</TitleText>
      <CaptionButton aria-label="Minimize">
        <svg width="12" height="12"><path d="M0 6.500h12" stroke="#888" /></svg>
      </CaptionButton>
      <CaptionButton aria-label="Restore">
        <svg width="13" height="13" fill="none" stroke="#888"><path d="M.5 3.500h9v9h-9zM3.500 3V.5h9v9H10" /></svg>
      </CaptionButton>
      <CaptionButton aria-label="Close">
        <svg width="13" height="13"><path d="M.5.5l12 12M12.500.5l-12 12" stroke="#888" /></svg>
      </CaptionButton>
    </TitleBar>
    <MenuBar>
      {menus.map(m => (
        <MenuLink key={m} href={`#${m.toLowerCase()}`}>{m}</MenuLink>
      ))}
    </MenuBar>
    <MainToolbar />
    <SketchToolbar />
    <Workspace>
      <AnalysisBar />
      <Main>
        <CanvasFrame>
          <CanvasColumn>
            <Canvas />
            <HTrack>
              <ScrollButton aria-label="Scroll left"><Chevron d={left} /></ScrollButton>
              <ScrollSpace $size={59} />
              <Thumb $grow={1} />
              <ScrollSpace $size={41} />
              <ScrollButton aria-label="Scroll right"><Chevron d={right} /></ScrollButton>
            </HTrack>
          </CanvasColumn>
          <VTrack>
            <ScrollButton aria-label="Scroll up"><Chevron d={up} /></ScrollButton>
            <ScrollSpace $size={53} />
            <Thumb $grow={1} />
            <ScrollSpace $size={36} />
            <ScrollButton aria-label="Scroll down"><Chevron d={down} /></ScrollButton>
            <ScrollSpace $size={21} />
          </VTrack>
        </CanvasFrame>
        <Status />
      </Main>
    </Workspace>
    <WindowsTaskbar />
    <EquationEditor />
  </Window>
);

export default App;
